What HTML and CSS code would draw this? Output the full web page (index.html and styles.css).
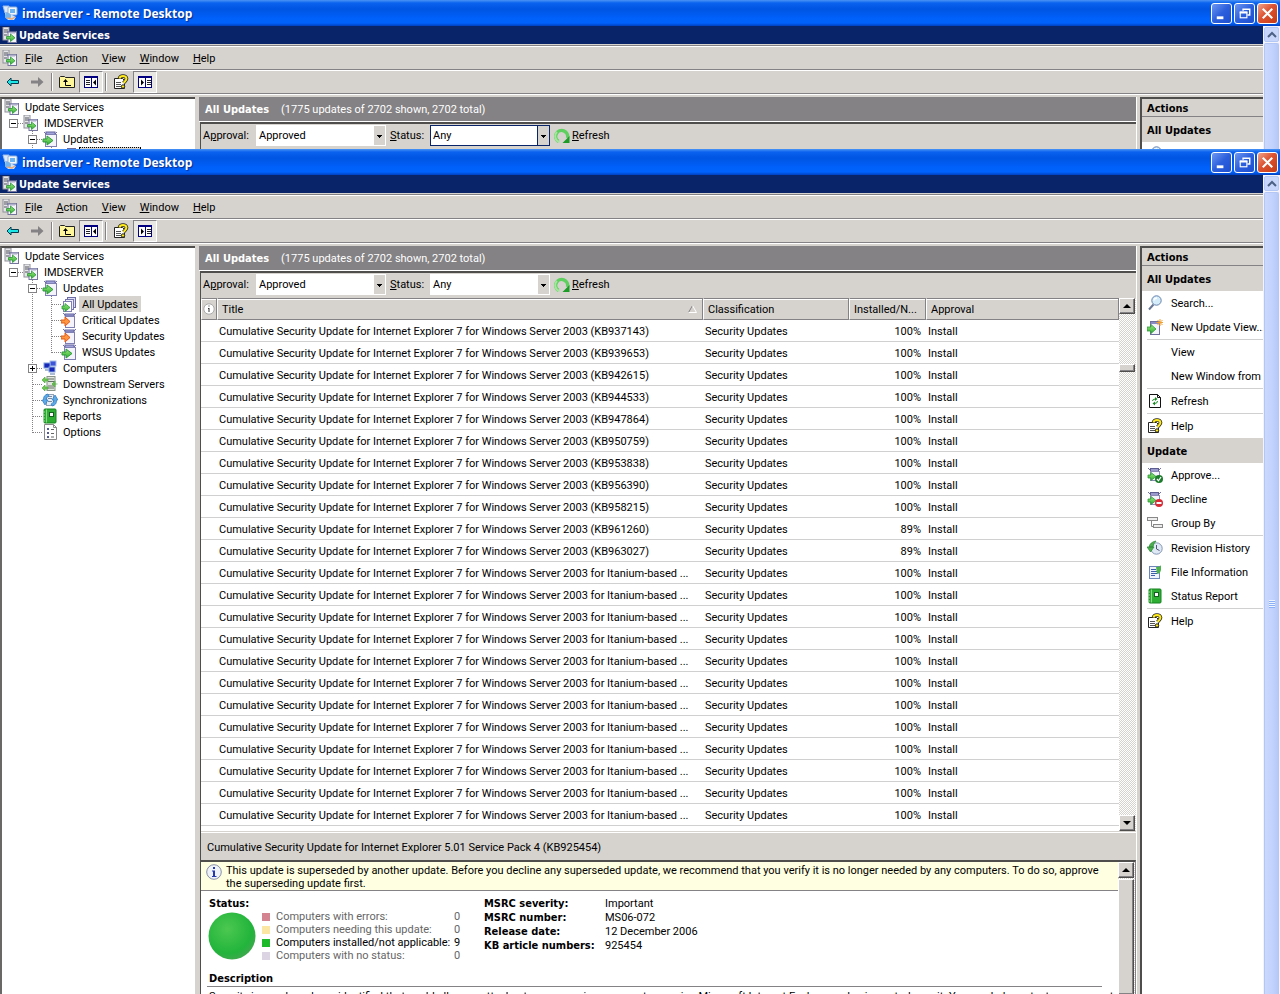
FILE: index.html
```html
<!DOCTYPE html>
<html lang="en">
<head>
<meta charset="utf-8">
<title>imdserver - Remote Desktop</title>
<link rel="stylesheet" href="styles.css">
</head>
<body>
<svg class="defs" aria-hidden="true">
  <defs>
    <linearGradient id="gArrow" x1="0" y1="0" x2="0" y2="1"><stop offset="0" stop-color="#9be77f"/><stop offset="1" stop-color="#2fae2f"/></linearGradient>
    <radialGradient id="gDisc" cx=".4" cy=".35" r=".65"><stop offset="0" stop-color="#4cc850"/><stop offset=".8" stop-color="#22b43c"/><stop offset="1" stop-color="#3aaa4a"/></radialGradient>
  </defs>
  <symbol id="i-rdp" viewBox="0 0 16 16"><path d="M1 1h6l1 6-5 1z" fill="#dbe9f8" stroke="#9dbbe4"/><rect x="6" y="2" width="9" height="8" rx="1" fill="#f4f8fd" stroke="#8fb0dc"/><rect x="8" y="4" width="5" height="4" fill="#6cb4f2"/><path d="M3 8v4l3 3h6l2-3-4-2z" fill="#d4e0ee"/><circle cx="6" cy="11" r="3" fill="#78b4ea"/><path d="M5 13l5 1 3-2" stroke="#e8a878" stroke-width="1.500" fill="none"/></symbol>
  <symbol id="i-server" viewBox="0 0 16 16"><rect x="1" y="0" width="6" height="13" fill="#e6e6ea" stroke="#90909a"/><path d="M2 3h4M2 5h4M2 8h3" stroke="#55555f"/><path d="M5 5h9l1-1" stroke="#6868a0" fill="none"/><rect x="6" y="5" width="8.500" height="10.500" fill="#f6f4fb" stroke="#75759e"/><path d="M8 6h5" stroke="#aaaacb"/><path d="M4.500 9.500h4V7l4.500 3.800L8.500 14.500V12h-4z" fill="url(#gArrow)" stroke="#2b9638" stroke-width=".8"/></symbol>
  <symbol id="i-updates" viewBox="0 0 16 16"><path d="M2 1l2 2M15 1l-2 2" stroke="#7272a8"/><rect x="4" y="1" width="9" height="3" fill="#a3a3dc" stroke="#6464a0"/><rect x="3.500" y="3.500" width="11" height="12" fill="#f4f2fb" stroke="#8080b4"/><path d="M1 8h4V5l6 4.500-6 4.500v-3H1z" fill="url(#gArrow)" stroke="#2b9c38"/></symbol>
  <symbol id="i-all" viewBox="0 0 16 16"><rect x="6.500" y="1.500" width="8" height="10" fill="#dcdcf4" stroke="#6b6ba2"/><rect x="4.500" y="3.500" width="8" height="10" fill="#ececfa" stroke="#7676ac"/><rect x="2.500" y="5.500" width="8" height="10" fill="#fff" stroke="#8080b4"/><path d="M1 10h3V7.500l5 4-5 4V13H1z" fill="url(#gArrow)" stroke="#2b9c38" stroke-width=".8"/></symbol>
  <symbol id="i-critical" viewBox="0 0 16 16"><path d="M2 1l2 2M15 1l-2 2" stroke="#7272a8"/><rect x="4" y="2" width="9" height="2" fill="#a3a3dc" stroke="#6464a0"/><rect x="4.500" y="4.500" width="9" height="11" fill="#f4f2fb" stroke="#8080b4"/><path d="M0 8h4V5l5 4.500L4 14v-3H0z" fill="#ff9440" stroke="#e15a14"/></symbol>
  <symbol id="i-computers" viewBox="0 0 16 16"><rect x="8" y="1" width="6" height="5" fill="#3d55d8" stroke="#a6bde6"/><rect x="2" y="3" width="6" height="5" fill="#1728b8" stroke="#7fa0dc"/><rect x="7" y="7" width="6" height="5" fill="#1728b8" stroke="#8aa8e0"/><path d="M3 10h4M8 14h5" stroke="#90a8c8" stroke-width="1.500"/></symbol>
  <symbol id="i-down" viewBox="0 0 16 16"><rect x="5" y=".5" width="8" height="14" fill="#e0e6de" stroke="#889488"/><path d="M6 3h6M6 5.500h6M6 10h6M6 12h6" stroke="#667066"/><path d="M0 4l3-3v2h3v2H3v2zM0 12l3-3v2h3v2H3v2zM15.500 8h-5M10 8l3-3v6z" fill="#6cc850" stroke="#52aa40" stroke-width=".7"/></symbol>
  <symbol id="i-sync" viewBox="0 0 16 16"><rect x="4.500" y="2.500" width="7" height="11" fill="#e8eef4" stroke="#92a2b4"/><path d="M6 4.500h4M6 6.500h4M6 9.500h4" stroke="#7888a0"/><path d="M6 2Q1 3 1.500 8H0l3 5 3-5H4Q4 5 7 4zM10 14q5-1 4.500-6H16l-3-5-3 5h2q0 3-3 4z" fill="#5ba9e6" stroke="#2c78c0" stroke-width=".7"/></symbol>
  <symbol id="i-report" viewBox="0 0 16 16"><rect x="2" y="1" width="12" height="14" rx="1" fill="#2eae32" stroke="#168022"/><path d="M4.500 1.500v13" stroke="#8fd888"/><rect x="7.500" y="4.500" width="4" height="4" fill="#fff" stroke="#175c20"/><path d="M1 4h2M1 7h2M1 10h2M1 13h2" stroke="#a5dca5"/></symbol>
  <symbol id="i-options" viewBox="0 0 16 16"><path d="M2.500.5h9l3 3v12h-12z" fill="#fff" stroke="#888"/><path d="M11.500.5v3h3" fill="none" stroke="#888"/><path d="M5 4h2v2H5zM5 8h2v2H5zM5 12h2v2H5z" fill="#555a90"/><path d="M9 5.500h3M9 9.500h3M9 13h3" stroke="#666"/></symbol>
  <symbol id="i-back" viewBox="0 0 16 16"><path d="M2 8l4-4v2.500h7.500v3H6V12z" fill="#1ce6e6" stroke="#003c50"/></symbol>
  <symbol id="i-fwd" viewBox="0 0 16 16"><path d="M14.500 8L9 3v3.500H2v3h7V13z" fill="#848284"/></symbol>
  <symbol id="i-folder" viewBox="0 0 16 16"><path d="M.5 13.500v-10l1-1h4l1 1h9v10z" fill="#fff799" stroke="#222"/><path d="M6.500 6v5.500H12" stroke="#000" fill="none"/><path d="M4 8h5L6.500 5z"/></symbol>
  <symbol id="i-paneL" viewBox="0 0 16 16"><rect x="1.500" y="2.500" width="13" height="11" fill="#fff" stroke="#000080"/><path d="M1 3h14" stroke="#000080" stroke-width="2"/><path d="M8.500 3v11" stroke="#000080"/><path d="M3 6.500h4M3 8.500h4M3 10.500h4" stroke="#222"/><path d="M13 5.500v6L10 8.500z"/></symbol>
  <symbol id="i-paneR" viewBox="0 0 16 16"><rect x="1.500" y="2.500" width="13" height="11" fill="#fff" stroke="#000080"/><path d="M1 3h14" stroke="#000080" stroke-width="2"/><path d="M8.500 3v11" stroke="#000080"/><path d="M10 6.500h4M10 8.500h4M10 10.500h4" stroke="#222"/><path d="M4 5.500v6L7 8.500z"/></symbol>
  <symbol id="i-help" viewBox="0 0 16 16"><path d="M1.500 4.500h8l2 2v8h-10z" fill="#fff" stroke="#222"/><path d="M3 8.500h5M3 10.500h5M3 12.500h6" stroke="#555"/><path d="M6.500 4.500Q7 2 10 2t3.500 2.500Q13.500 6 10.500 9" fill="none" stroke="#222" stroke-width="3.600"/><path d="M6.500 4.500Q7 2 10 2t3.500 2.500Q13.500 6 10.500 9" fill="none" stroke="#ffeb1c" stroke-width="2"/><circle cx="10" cy="12.500" r="1.700" fill="#ffeb1c" stroke="#222"/></symbol>
  <symbol id="i-refresh" viewBox="0 0 16 16"><path d="M4.500 13.500A6 6 0 1 1 13.500 10" fill="none" stroke="#5fd05f" stroke-width="3.400"/><path d="M5.500 14A6 6 0 0 1 3 4" fill="none" stroke="#a4e69c" stroke-width="2"/><path d="M15.500 8v7H8.500z" fill="#1c9c26"/></symbol>
  <symbol id="i-search" viewBox="0 0 16 16"><path d="M6.500 9.500L2 14.500" stroke="#6a7896" stroke-width="2"/><circle cx="9.500" cy="5.500" r="4.700" fill="#d5ecfb" stroke="#6782ac"/><path d="M7 5.500a3 3 0 0 1 3-2.500" stroke="#fff" fill="none" stroke-width="1.500"/></symbol>
  <symbol id="i-newview" viewBox="0 0 16 16"><rect x="3.500" y="2.500" width="9" height="13" fill="#f4f2fb" stroke="#70709c"/><path d="M4 4h8" stroke="#8c8cc4" stroke-width="2"/><path d="M0 8h4V5.500l5 4.500-5 4.500V12H0z" fill="url(#gArrow)" stroke="#2b9c38" stroke-width=".8"/><path d="M13 0v7M9.500 3.500h6.500M10.500 1l5 5M15.500 1l-5 5" stroke="#f0a030"/></symbol>
  <symbol id="i-pagerefresh" viewBox="0 0 16 16"><path d="M2.500 1.500h8l3 3v10h-11z" fill="#fff" stroke="#111"/><path d="M10.500 1.500v3h3" fill="none" stroke="#111"/><path d="M5.500 8q0-2 3-2M10.500 8q0 2.500-3 2.500" stroke="#1a8a24" fill="none"/><path d="M8 4v4l2.500-2zM8 8.500v4l-2.500-2z" fill="#1a8a24"/></symbol>
  <symbol id="i-mini" viewBox="0 0 16 16"><path d="M1 1l2 2M14 1l-2 2" stroke="#7272a8"/><rect x="3.500" y="1.500" width="8" height="3" fill="#9a9acc" stroke="#5c5c90"/><rect x="3.500" y="4.500" width="9" height="9" fill="#f4f2fb" stroke="#8a8ab4"/><path d="M1 8h3V5.500l5 4-5 4V11H1z" fill="url(#gArrow)" stroke="#2b9c38" stroke-width=".8"/></symbol>
  <symbol id="i-approve" viewBox="0 0 16 16"><use href="#i-mini"/><circle cx="12" cy="12" r="4" fill="#1b7c2b"/><path d="M10 12l1.500 1.800L14 10" fill="none" stroke="#fff" stroke-width="1.200"/></symbol>
  <symbol id="i-decline" viewBox="0 0 16 16"><use href="#i-mini"/><circle cx="12" cy="12" r="4" fill="#d62c36"/><path d="M9.500 12h5" stroke="#fff" stroke-width="2"/></symbol>
  <symbol id="i-group" viewBox="0 0 16 16"><path d="M4.500 6v5.500h3" fill="none" stroke="#888"/><rect x=".5" y="2.500" width="10" height="3" fill="#eee" stroke="#888"/><rect x="6.500" y="9.500" width="9" height="3" fill="#eee" stroke="#888"/></symbol>
  <symbol id="i-history" viewBox="0 0 16 16"><circle cx="9.500" cy="8.500" r="5.700" fill="#dfe9f5" stroke="#8496b4"/><path d="M9.500 5v4l3 1.500" fill="none" stroke="#557"/><path d="M0 7h7L3.500 12zM2 7Q3 2 9 1 6 4 6 7z" fill="#4cb04c" stroke="#2b843a" stroke-width=".7"/></symbol>
  <symbol id="i-fileinfo" viewBox="0 0 16 16"><rect x="2.500" y="2.500" width="10" height="12" fill="#eef3fc" stroke="#6e86b8"/><path d="M4 5.500h5M4 7.500h6M4 9.500h6M4 11.500h4" stroke="#3c5eac"/><path d="M9 3q4 0 5-2v5q-1 4-4 4z" fill="#4db24d"/></symbol>
  <symbol id="i-info" viewBox="0 0 16 16"><circle cx="8" cy="8" r="7.300" fill="#f0f2fa" stroke="#8890a8"/><path d="M7 3h2v2H7zM6 6.500h3V12h1.500v1h-4.500v-1H7V7.500H6z" fill="#2438b0"/></symbol>
  <symbol id="i-infosm" viewBox="0 0 12 12"><circle cx="6" cy="6" r="5.200" fill="#fff" stroke="#aaa"/><path d="M5.500 2.500h1v1h-1zM5 5h1.500v4H5.500V6H5z" fill="#333"/></symbol>
  <symbol id="g-minus" viewBox="0 0 19 16"><path d="M14 8.500h5" class="dots"/><rect x="5.500" y="4.500" width="8" height="8" fill="#fff" stroke="#848284"/><path d="M7 8.500h5" stroke="#000"/></symbol>
  <symbol id="g-plus" viewBox="0 0 19 16"><path d="M9.500 0v16M14 8.500h5" class="dots"/><rect x="5.500" y="4.500" width="8" height="8" fill="#fff" stroke="#848284"/><path d="M7 8.500h5M9.500 6v5" stroke="#000"/></symbol>
  <symbol id="g-minusd" viewBox="0 0 19 16"><path d="M9.500 0v16M14 8.500h5" class="dots"/><rect x="5.500" y="4.500" width="8" height="8" fill="#fff" stroke="#848284"/><path d="M7 8.500h5" stroke="#000"/></symbol>
  <symbol id="g-line" viewBox="0 0 19 16"><path d="M9.500 0v16" class="dots"/></symbol>
  <symbol id="g-tee" viewBox="0 0 19 16"><path d="M9.500 0v16M10 8.500h9" class="dots"/></symbol>
  <symbol id="g-end" viewBox="0 0 19 16"><path d="M9.500 0v9M10 8.500h9" class="dots"/></symbol>
  <symbol id="w-min" viewBox="0 0 20 20"><path d="M5 13h7v3H5z" fill="#fff"/></symbol>
  <symbol id="w-max" viewBox="0 0 20 20"><path d="M8.500 7V5.500h7v6H13M8 5.500h8" fill="none" stroke="#fff" stroke-width="1.500"/><rect x="5.500" y="8.500" width="7" height="6" fill="none" stroke="#fff" stroke-width="1.200"/><path d="M5 9h8" stroke="#fff" stroke-width="2"/></symbol>
  <symbol id="w-close" viewBox="0 0 20 20"><path d="M5 5l10 10M15 5L5 15" stroke="#fff" stroke-width="2.200"/></symbol>
  <symbol id="a-chev" viewBox="0 0 16 16"><path d="M4 10l4-4 4 4" fill="none" stroke="#4d6185" stroke-width="2"/></symbol>
  <symbol id="a-up" viewBox="0 0 16 16"><path d="M4 10h8L8 6z"/></symbol>
  <symbol id="a-down" viewBox="0 0 16 16"><path d="M4 6h8l-4 4z"/></symbol>
</svg>

<section class="window window-back">
  <header class="titlebar"><svg class="ico"><use href="#i-rdp"/></svg><h1>imdserver - Remote Desktop</h1>
    <button class="wbtn" aria-label="Minimize"><svg><use href="#w-min"/></svg></button><button class="wbtn" aria-label="Restore"><svg><use href="#w-max"/></svg></button><button class="wbtn close" aria-label="Close"><svg><use href="#w-close"/></svg></button></header>
  <div class="session">
    <div class="console">
      <div class="apptitle"><svg class="ico"><use href="#i-server"/></svg><h2>Update Services</h2></div>
      <nav class="menubar"><svg class="ico"><use href="#i-server"/></svg><button><u>F</u>ile</button><button><u>A</u>ction</button><button><u>V</u>iew</button><button><u>W</u>indow</button><button><u>H</u>elp</button></nav>
      <div class="toolbar"><button aria-label="Back"><svg class="ico"><use href="#i-back"/></svg></button><button aria-label="Forward"><svg class="ico"><use href="#i-fwd"/></svg></button><i class="sep"></i><button aria-label="Up"><svg class="ico"><use href="#i-folder"/></svg></button><button class="on" aria-label="Console tree"><svg class="ico"><use href="#i-paneL"/></svg></button><i class="sep"></i><button aria-label="Help"><svg class="ico"><use href="#i-help"/></svg></button><button class="on" aria-label="Action pane"><svg class="ico"><use href="#i-paneR"/></svg></button></div>
      <div class="panes">
        <ul class="tree">
          <li><svg class="ico"><use href="#i-server"/></svg><span>Update Services</span></li>
          <li><svg class="g"><use href="#g-minus"/></svg><svg class="ico"><use href="#i-server"/></svg><span>IMDSERVER</span></li>
          <li><i class="g"></i><svg class="g"><use href="#g-minusd"/></svg><svg class="ico"><use href="#i-updates"/></svg><span>Updates</span></li>
          <li><i class="g"></i><svg class="g"><use href="#g-line"/></svg><svg class="g"><use href="#g-tee"/></svg><svg class="ico"><use href="#i-all"/></svg><span class="sel focus">All Updates</span></li>
        </ul>
        <main class="center">
          <div class="banner"><h3>All Updates</h3><span>(1775 updates of 2702 shown, 2702 total)</span></div>
          <div class="board">
            <div class="filters"><label for="ap1">A<u>p</u>proval:</label><span class="combo wide"><select id="ap1"><option>Approved</option></select></span><label for="st1"><u>S</u>tatus:</label><span class="combo active"><select id="st1"><option>Any</option></select></span><button><svg class="ico"><use href="#i-refresh"/></svg><span><u>R</u>efresh</span></button></div>
          </div>
        </main>
        <aside class="actions">
          <h3>Actions</h3>
          <h4>All Updates</h4>
          <ul><li><button aria-label="Search"><svg class="ico"><use href="#i-search"/></svg></button></li></ul>
        </aside>
      </div>
    </div>
    <div class="xpscroll"><button aria-label="Scroll up"><svg class="ico"><use href="#a-chev"/></svg></button><div class="xpthumb"></div></div>
  </div>
</section>

<section class="window window-front">
  <header class="titlebar"><svg class="ico"><use href="#i-rdp"/></svg><h1>imdserver - Remote Desktop</h1>
    <button class="wbtn" aria-label="Minimize"><svg><use href="#w-min"/></svg></button><button class="wbtn" aria-label="Restore"><svg><use href="#w-max"/></svg></button><button class="wbtn close" aria-label="Close"><svg><use href="#w-close"/></svg></button></header>
  <div class="session">
    <div class="console">
      <div class="apptitle"><svg class="ico"><use href="#i-server"/></svg><h2>Update Services</h2></div>
      <nav class="menubar"><svg class="ico"><use href="#i-server"/></svg><button><u>F</u>ile</button><button><u>A</u>ction</button><button><u>V</u>iew</button><button><u>W</u>indow</button><button><u>H</u>elp</button></nav>
      <div class="toolbar"><button aria-label="Back"><svg class="ico"><use href="#i-back"/></svg></button><button aria-label="Forward"><svg class="ico"><use href="#i-fwd"/></svg></button><i class="sep"></i><button aria-label="Up"><svg class="ico"><use href="#i-folder"/></svg></button><button class="on" aria-label="Console tree"><svg class="ico"><use href="#i-paneL"/></svg></button><i class="sep"></i><button aria-label="Help"><svg class="ico"><use href="#i-help"/></svg></button><button class="on" aria-label="Action pane"><svg class="ico"><use href="#i-paneR"/></svg></button></div>
      <div class="panes">
        <ul class="tree">
          <li><svg class="ico"><use href="#i-server"/></svg><span>Update Services</span></li>
          <li><svg class="g"><use href="#g-minus"/></svg><svg class="ico"><use href="#i-server"/></svg><span>IMDSERVER</span></li>
          <li><i class="g"></i><svg class="g"><use href="#g-minusd"/></svg><svg class="ico"><use href="#i-updates"/></svg><span>Updates</span></li>
          <li><i class="g"></i><svg class="g"><use href="#g-line"/></svg><svg class="g"><use href="#g-tee"/></svg><svg class="ico"><use href="#i-all"/></svg><span class="sel">All Updates</span></li>
          <li><i class="g"></i><svg class="g"><use href="#g-line"/></svg><svg class="g"><use href="#g-tee"/></svg><svg class="ico"><use href="#i-critical"/></svg><span>Critical Updates</span></li>
          <li><i class="g"></i><svg class="g"><use href="#g-line"/></svg><svg class="g"><use href="#g-tee"/></svg><svg class="ico"><use href="#i-critical"/></svg><span>Security Updates</span></li>
          <li><i class="g"></i><svg class="g"><use href="#g-line"/></svg><svg class="g"><use href="#g-end"/></svg><svg class="ico"><use href="#i-updates"/></svg><span>WSUS Updates</span></li>
          <li><i class="g"></i><svg class="g"><use href="#g-plus"/></svg><svg class="ico"><use href="#i-computers"/></svg><span>Computers</span></li>
          <li><i class="g"></i><svg class="g"><use href="#g-tee"/></svg><svg class="ico"><use href="#i-down"/></svg><span>Downstream Servers</span></li>
          <li><i class="g"></i><svg class="g"><use href="#g-tee"/></svg><svg class="ico"><use href="#i-sync"/></svg><span>Synchronizations</span></li>
          <li><i class="g"></i><svg class="g"><use href="#g-tee"/></svg><svg class="ico"><use href="#i-report"/></svg><span>Reports</span></li>
          <li><i class="g"></i><svg class="g"><use href="#g-end"/></svg><svg class="ico"><use href="#i-options"/></svg><span>Options</span></li>
        </ul>
        <main class="center">
          <div class="banner"><h3>All Updates</h3><span>(1775 updates of 2702 shown, 2702 total)</span></div>
          <div class="board">
            <div class="filters"><label for="ap2">A<u>p</u>proval:</label><span class="combo wide"><select id="ap2"><option>Approved</option></select></span><label for="st2"><u>S</u>tatus:</label><span class="combo"><select id="st2"><option>Any</option></select></span><button><svg class="ico"><use href="#i-refresh"/></svg><span><u>R</u>efresh</span></button></div>
            <div class="list">
              <table>
                <colgroup><col class="c-info"><col class="c-title"><col class="c-class"><col class="c-inst"><col class="c-appr"></colgroup>
                <thead><tr><th aria-label="Information"><svg class="infosm"><use href="#i-infosm"/></svg></th><th><div class="sorted"><span>Title</span><svg viewBox="0 0 9 8"><path d="M.5 7.500L4.500.5" stroke="#848284" fill="none"/><path d="M4.500.5l4 7h-8" stroke="#fff" fill="none"/></svg></div></th><th>Classification</th><th>Installed/N...</th><th>Approval</th></tr></thead>
                <tbody>
                  <tr><td></td><td>Cumulative Security Update for Internet Explorer 7 for Windows Server 2003 (KB937143)</td><td>Security Updates</td><td>100%</td><td>Install</td></tr>
                  <tr><td></td><td>Cumulative Security Update for Internet Explorer 7 for Windows Server 2003 (KB939653)</td><td>Security Updates</td><td>100%</td><td>Install</td></tr>
                  <tr><td></td><td>Cumulative Security Update for Internet Explorer 7 for Windows Server 2003 (KB942615)</td><td>Security Updates</td><td>100%</td><td>Install</td></tr>
                  <tr><td></td><td>Cumulative Security Update for Internet Explorer 7 for Windows Server 2003 (KB944533)</td><td>Security Updates</td><td>100%</td><td>Install</td></tr>
                  <tr><td></td><td>Cumulative Security Update for Internet Explorer 7 for Windows Server 2003 (KB947864)</td><td>Security Updates</td><td>100%</td><td>Install</td></tr>
                  <tr><td></td><td>Cumulative Security Update for Internet Explorer 7 for Windows Server 2003 (KB950759)</td><td>Security Updates</td><td>100%</td><td>Install</td></tr>
                  <tr><td></td><td>Cumulative Security Update for Internet Explorer 7 for Windows Server 2003 (KB953838)</td><td>Security Updates</td><td>100%</td><td>Install</td></tr>
                  <tr><td></td><td>Cumulative Security Update for Internet Explorer 7 for Windows Server 2003 (KB956390)</td><td>Security Updates</td><td>100%</td><td>Install</td></tr>
                  <tr><td></td><td>Cumulative Security Update for Internet Explorer 7 for Windows Server 2003 (KB958215)</td><td>Security Updates</td><td>100%</td><td>Install</td></tr>
                  <tr><td></td><td>Cumulative Security Update for Internet Explorer 7 for Windows Server 2003 (KB961260)</td><td>Security Updates</td><td>89%</td><td>Install</td></tr>
                  <tr><td></td><td>Cumulative Security Update for Internet Explorer 7 for Windows Server 2003 (KB963027)</td><td>Security Updates</td><td>89%</td><td>Install</td></tr>
                  <tr><td></td><td>Cumulative Security Update for Internet Explorer 7 for Windows Server 2003 for Itanium-based ...</td><td>Security Updates</td><td>100%</td><td>Install</td></tr>
                  <tr><td></td><td>Cumulative Security Update for Internet Explorer 7 for Windows Server 2003 for Itanium-based ...</td><td>Security Updates</td><td>100%</td><td>Install</td></tr>
                  <tr><td></td><td>Cumulative Security Update for Internet Explorer 7 for Windows Server 2003 for Itanium-based ...</td><td>Security Updates</td><td>100%</td><td>Install</td></tr>
                  <tr><td></td><td>Cumulative Security Update for Internet Explorer 7 for Windows Server 2003 for Itanium-based ...</td><td>Security Updates</td><td>100%</td><td>Install</td></tr>
                  <tr><td></td><td>Cumulative Security Update for Internet Explorer 7 for Windows Server 2003 for Itanium-based ...</td><td>Security Updates</td><td>100%</td><td>Install</td></tr>
                  <tr><td></td><td>Cumulative Security Update for Internet Explorer 7 for Windows Server 2003 for Itanium-based ...</td><td>Security Updates</td><td>100%</td><td>Install</td></tr>
                  <tr><td></td><td>Cumulative Security Update for Internet Explorer 7 for Windows Server 2003 for Itanium-based ...</td><td>Security Updates</td><td>100%</td><td>Install</td></tr>
                  <tr><td></td><td>Cumulative Security Update for Internet Explorer 7 for Windows Server 2003 for Itanium-based ...</td><td>Security Updates</td><td>100%</td><td>Install</td></tr>
                  <tr><td></td><td>Cumulative Security Update for Internet Explorer 7 for Windows Server 2003 for Itanium-based ...</td><td>Security Updates</td><td>100%</td><td>Install</td></tr>
                  <tr><td></td><td>Cumulative Security Update for Internet Explorer 7 for Windows Server 2003 for Itanium-based ...</td><td>Security Updates</td><td>100%</td><td>Install</td></tr>
                  <tr><td></td><td>Cumulative Security Update for Internet Explorer 7 for Windows Server 2003 for Itanium-based ...</td><td>Security Updates</td><td>100%</td><td>Install</td></tr>
                  <tr><td></td><td>Cumulative Security Update for Internet Explorer 7 for Windows Server 2003 for Itanium-based ...</td><td>Security Updates</td><td>100%</td><td>Install</td></tr>
                </tbody>
              </table>
              <div class="scroll"><button aria-label="Scroll up"><svg><use href="#a-up"/></svg></button><div class="track"><div class="thumb"></div></div><button aria-label="Scroll down"><svg><use href="#a-down"/></svg></button></div>
            </div>
            <div class="selected">Cumulative Security Update for Internet Explorer 5.01 Service Pack 4 (KB925454)</div>
            <div class="details">
              <div class="info">
                <p class="notice"><svg class="ico"><use href="#i-info"/></svg><span>This update is superseded by another update. Before you decline any superseded update, we recommend that you verify it is no longer needed by any computers. To do so, approve the superseding update first.</span></p>
                <div class="facts">
                  <div>
                    <h4>Status:</h4>
                    <div class="status">
                      <svg class="disc" viewBox="0 0 48 48"><circle cx="24" cy="24" r="23.500" fill="url(#gDisc)"/></svg>
                      <dl class="counts">
                        <dt class="err">Computers with errors:</dt><dd>0</dd>
                        <dt class="need">Computers needing this update:</dt><dd>0</dd>
                        <dt class="ok">Computers installed/not applicable:</dt><dd class="strong">9</dd>
                        <dt class="none">Computers with no status:</dt><dd>0</dd>
                      </dl>
                    </div>
                  </div>
                  <dl class="meta"><dt>MSRC severity:</dt><dd>Important</dd><dt>MSRC number:</dt><dd>MS06-072</dd><dt>Release date:</dt><dd>12 December 2006</dd><dt>KB article numbers:</dt><dd>925454</dd></dl>
                </div>
                <div class="desc"><h4>Description</h4><p>Security issues have been identified that could allow an attacker to compromise a computer running Microsoft Internet Explorer and gain control over it. You can help protect your computer by</p></div>
              </div>
              <div class="scroll"><button aria-label="Scroll up"><svg><use href="#a-up"/></svg></button><div class="thumb tall"></div></div>
            </div>
          </div>
        </main>
        <aside class="actions">
          <h3>Actions</h3>
          <h4>All Updates</h4>
          <ul>
            <li><button><svg class="ico"><use href="#i-search"/></svg><span>Search...</span></button></li>
            <li><button><svg class="ico"><use href="#i-newview"/></svg><span>New Update View...</span></button></li>
            <li class="rule"><button><i class="ico"></i><span>View</span></button></li>
            <li><button><i class="ico"></i><span>New Window from Here</span></button></li>
            <li class="rule"><button><svg class="ico"><use href="#i-pagerefresh"/></svg><span>Refresh</span></button></li>
            <li class="rule"><button><svg class="ico"><use href="#i-help"/></svg><span>Help</span></button></li>
          </ul>
          <h4>Update</h4>
          <ul>
            <li><button><svg class="ico"><use href="#i-approve"/></svg><span>Approve...</span></button></li>
            <li><button><svg class="ico"><use href="#i-decline"/></svg><span>Decline</span></button></li>
            <li><button><svg class="ico"><use href="#i-group"/></svg><span>Group By</span></button></li>
            <li class="rule"><button><svg class="ico"><use href="#i-history"/></svg><span>Revision History</span></button></li>
            <li><button><svg class="ico"><use href="#i-fileinfo"/></svg><span>File Information</span></button></li>
            <li><button><svg class="ico"><use href="#i-report"/></svg><span>Status Report</span></button></li>
            <li class="rule"><button><svg class="ico"><use href="#i-help"/></svg><span>Help</span></button></li>
          </ul>
        </aside>
      </div>
    </div>
    <div class="xpscroll"><button aria-label="Scroll up"><svg class="ico"><use href="#a-chev"/></svg></button><div class="xpthumb"><i class="grip"></i></div></div>
  </div>
</section>
</body>
</html>
```

FILE: styles.css
```css
* { box-sizing: border-box; }
body {
  margin: 0;
  height: 100vh;
  overflow: hidden;
  display: flex;
  flex-direction: column;
  font: 11px/13px Roboto, "Liberation Sans", sans-serif;
  color: #000;
  background: #d6d3ce;
}
h1, h2, h3, h4, p, ul, dl, dd { margin: 0; padding: 0; }
h2, h3, h4 { font: bold 11px/13px "DejaVu Sans Condensed", "DejaVu Sans", sans-serif; }
ul { list-style: none; }
button { margin: 0; padding: 0; border: 0; background: none; font: inherit; color: inherit; display: flex; align-items: center; }
svg { display: block; flex: none; }
.defs { position: absolute; width: 0; height: 0; }
.dots { stroke: #848284; stroke-dasharray: 1 1; fill: none; }
.ico { width: 16px; height: 16px; flex: none; }

/* Remote Desktop frame */
.window { display: flex; flex-direction: column; overflow: hidden; }
.window-back { flex: 0 0 149px; }
.window-front { flex: 1; min-height: 0; }
.titlebar {
  flex: none; height: 26px; display: flex; align-items: center; gap: 2px; padding: 0 2px;
  background: linear-gradient(#4a94f5 0, #0a62ee 3px, #0055e2 9px, #0060fa 18px, #0062fc 23px, #0040c0 26px);
}
.titlebar h1 { flex: 1; padding: 2px 0 0 2px; font: bold 12px/16px "Open Sans", sans-serif; color: #fff; text-shadow: 1px 1px 1px #0a2c8c; }
.wbtn { width: 21px; height: 21px; border: 1px solid #fff; border-radius: 3px; background: linear-gradient(135deg, #6e97f2, #2c5fdc 50%, #1d4fd0); }
.wbtn svg { width: 19px; height: 19px; }
.wbtn.close { background: linear-gradient(135deg, #f0a48c, #dd5230 45%, #c53a16); }
.session { flex: 1; min-height: 0; display: flex; }
.console { flex: 1; min-width: 0; display: flex; flex-direction: column; background: #d6d3ce; }
.xpscroll { width: 17px; flex: none; display: flex; flex-direction: column; gap: 1px; padding: 1px 1px 0; background: #f3f4fb; }
.xpscroll button { height: 15px; border: 1px solid #b4c8f6; border-radius: 2px; background: #c8d6fb; justify-content: center; overflow: hidden; }
.xpthumb { flex: 1; border: 1px solid #b4c6f4; border-bottom: 0; border-radius: 2px 2px 0 0; background: linear-gradient(90deg, #cbd8fd, #c2d2fd 60%, #b6c8f8); display: flex; align-items: center; justify-content: center; padding-top: 20px; }
.grip { width: 6px; height: 8px; background: repeating-linear-gradient(#eef4fe 0 1px, #8cb0f8 1px 2px); }

/* Console chrome */
.apptitle { flex: none; height: 18px; display: flex; align-items: center; gap: 1px; padding-left: 2px; background: #0a246a; color: #fff; }
.menubar { flex: none; height: 25px; margin-top: 1px; border-top: 1px solid #848284; border-bottom: 1px solid #848284; box-shadow: inset 0 1px #fff; display: flex; align-items: center; padding: 1px 0 0 2px; }
.menubar button { padding: 0 7px; }
.toolbar { flex: none; height: 24px; border-top: 1px solid #fff; border-bottom: 1px solid #848284; display: flex; align-items: center; padding-left: 1px; }
.toolbar button { width: 24px; height: 22px; justify-content: center; }
.toolbar .on { border: 1px solid; border-color: #848284 #fff #fff #848284; background: #e9e7e3; }
.sep { width: 2px; height: 18px; margin: 0 2px; border-left: 1px solid #848284; border-right: 1px solid #fff; }
.panes { flex: 1; min-height: 0; display: flex; border-top: 1px solid #fff; padding-top: 2px; }

/* Tree */
.tree { width: 195px; flex: none; background: #fff; border-top: 2px solid #504e4c; border-left: 2px solid #6a6866; padding: 0 0 0 2px; }
.tree li { height: 16px; display: flex; align-items: center; }
.tree .g { width: 19px; height: 16px; flex: none; }
.tree span { padding: 1px 3px 0; margin-left: 2px; line-height: 15px; white-space: nowrap; }
.tree .sel { background: #d6d3ce; }
.tree .focus { outline: 1px dotted #000; outline-offset: -1px; }

/* Center */
.center { flex: 1; min-width: 0; display: flex; flex-direction: column; margin: 0 3px 0 4px; border-right: 1px solid #fff; }
.banner { flex: none; height: 25px; display: flex; align-items: center; gap: 12px; padding-left: 6px; background: #848284; color: #fff; border-bottom: 1px solid #fff; }
.board { flex: 1; min-height: 0; display: flex; flex-direction: column; border: solid #504e4c; border-width: 2px 0 0 1px; margin-left: 1px; }
.filters { flex: none; height: 25px; display: flex; align-items: center; padding: 0 0 2px 2px; }
.filters label { width: 53px; white-space: nowrap; }
.filters .wide + label { width: 41px; padding-left: 1px; }
.filters button { gap: 2px; }
.combo { position: relative; width: 120px; height: 21px; background: #fff; margin-right: 4px; }
.combo.wide { width: 130px; margin-right: 3px; }
.combo::after { content: ""; position: absolute; right: 1px; top: 1px; width: 11px; height: 19px; background: linear-gradient(#000, #000) 3px 9px / 5px 1px no-repeat, linear-gradient(#000, #000) 4px 10px / 3px 1px no-repeat, linear-gradient(#000, #000) 5px 11px / 1px 1px no-repeat, #d6d3ce; pointer-events: none; }
.combo select { appearance: none; width: 100%; height: 21px; border: 0; padding: 0 12px 0 3px; background: none; font: inherit; color: inherit; }
.combo.active { box-shadow: inset 0 0 0 1px #0a246a; }
.combo.active::after { border-left: 1px solid #0a246a; width: 11px; }

.list { flex: 1; min-height: 0; display: flex; align-items: stretch; background: #fff; border-bottom: 1px solid #d6d3ce; overflow: hidden; }
table { flex: 1; min-width: 0; align-self: flex-start; table-layout: fixed; border-collapse: separate; border-spacing: 0; width: 100%; }
.c-info { width: 16px; } .c-title { width: 486px; } .c-class { width: 146px; } .c-inst { width: 77px; }
th, td { height: 22px; text-align: left; font-weight: normal; white-space: nowrap; overflow: hidden; }
th { padding: 0 4px; background: #d6d3ce; border: 1px solid; border-color: #848284 #848284 #848284 #fff; box-shadow: inset 0 1px #fff; }
th:first-child { padding: 0 1px; }
td { padding: 2px 2px 0; border-bottom: 1px solid #d0d0d0; }
td:nth-child(4) { text-align: right; padding-right: 5px; }
.infosm { width: 12px; height: 12px; }
.sorted { display: flex; justify-content: space-between; align-items: center; padding-right: 1px; }
.sorted svg { width: 9px; height: 8px; }
.scroll { width: 17px; flex: none; display: flex; flex-direction: column; background: repeating-conic-gradient(#fff 0 25%, #d6d3ce 0 50%) 0 0 / 2px 2px; }
.scroll button, .thumb { flex: none; height: 16px; width: 16px; background: #d6d3ce; border: 1px solid; border-color: #fff #504e4c #504e4c #fff; box-shadow: inset -1px -1px #848284; justify-content: center; }
.scroll svg { width: 16px; height: 16px; }
.track { flex: 1; display: flex; flex-direction: column; }
.thumb { margin-top: 50px; height: 8px; }
.thumb.tall { flex: 1; margin-top: 1px; height: auto; border-bottom: 0; }

/* Details */
.selected { flex: none; height: 28px; line-height: 26px; padding: 2px 6px 0; border-top: 1px solid #fff; }
.details { flex: none; height: 134px; display: flex; background: #fff; border-top: 2px solid #504e4c; border-right: 1px solid #848284; overflow: hidden; }
.info { flex: 1; min-width: 0; }
.notice { display: flex; gap: 4px; height: 29px; padding: 2px 14px 0 5px; background: #ffffe1; border-bottom: 1px solid #848284; }
.facts { display: flex; gap: 22px; padding: 6px 7px 0; }
.facts h4 { padding-left: 1px; }
.status { display: flex; align-items: center; gap: 6px; }
.disc { width: 48px; height: 48px; }
.counts { display: grid; grid-template-columns: 192px 8px; line-height: 13px; color: #666; }
.counts dt { display: flex; align-items: center; gap: 6px; white-space: nowrap; }
.counts dt::before { content: ""; width: 8px; height: 8px; }
.counts .err::before { background: #d48490; }
.counts .need::before { background: #fbe6a4; }
.counts .ok::before { background: #1fba2c; }
.counts .none::before { background: #dcd4e2; }
.counts .ok, .counts .strong { color: #000; }
.meta { display: grid; grid-template-columns: 121px auto; grid-auto-rows: 14px; align-content: start; }
.meta dt { font: bold 11px/13px "DejaVu Sans Condensed", "DejaVu Sans", sans-serif; white-space: nowrap; }
.desc { margin: 8px 16px 0 6px; }
.desc h4 { height: 17px; padding: 2px 2px 0; border-bottom: 1px solid #848284; }
.desc p { padding: 3px 2px 0; white-space: nowrap; }

/* Actions */
.actions { width: 123px; flex: none; overflow: hidden; background: #fff; border: solid #504e4c; border-width: 2px 0 0 2px; }
.actions h3 { height: 18px; padding: 3px 5px 1px; background: #d6d3ce; border-bottom: 1px solid #848284; }
.actions h4 { height: 25px; padding: 7px 5px 5px; background: #d6d3ce; }
.actions li button { height: 24px; width: 100%; padding-left: 5px; gap: 8px; white-space: nowrap; }
.actions .rule { border-top: 1px solid #d0d0d0; margin-left: 5px; }
.actions .rule button { padding-left: 0; }
```
